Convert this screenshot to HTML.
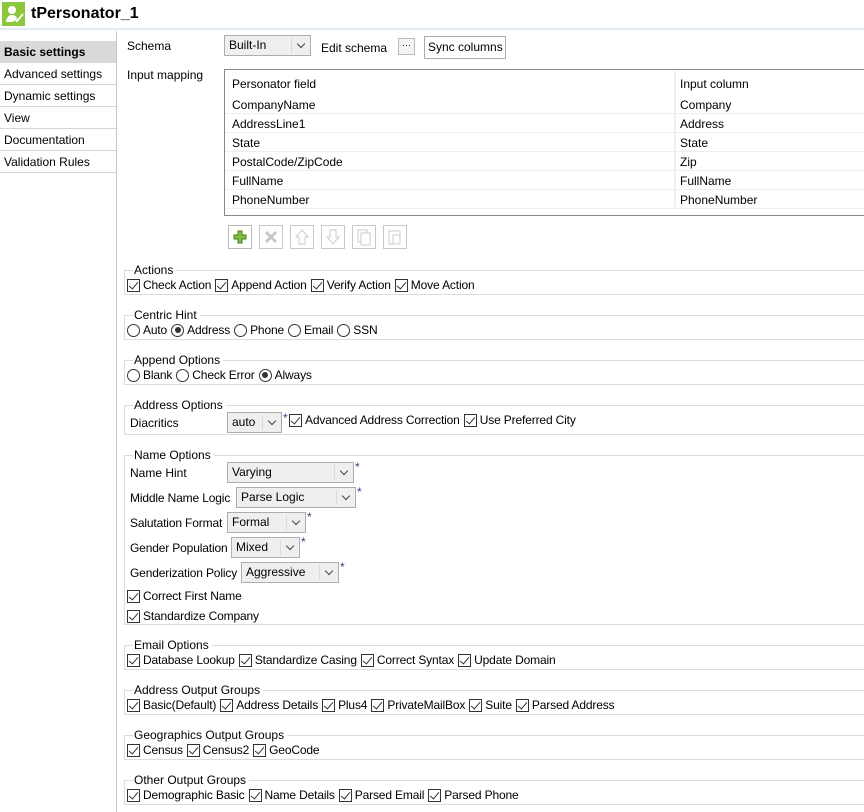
<!DOCTYPE html>
<html><head><meta charset="utf-8"><style>
*{box-sizing:border-box;margin:0;padding:0}
body{width:864px;height:812px;overflow:hidden;background:#fff;font-family:"Liberation Sans",sans-serif;font-size:12px;color:#000;position:relative}
.a{position:absolute;white-space:nowrap}
.side div{position:absolute;left:0;width:116px;height:22px;border-bottom:1px solid #d6d6d6;padding:4px 0 0 4px}
.grp{position:absolute;left:124px;right:-2px;border:1px solid #dcdcdc;border-right:none}
.gt{position:absolute;left:8px;top:-8px;background:#fff;padding:0 3px 0 1px;line-height:14px}
.row{position:absolute;left:2px;display:flex;align-items:center;white-space:nowrap;letter-spacing:-0.15px}
.cb{width:13px;height:13px;border:1px solid #333;display:inline-block;position:relative;margin-right:3px;background:#fff}
.cb:after{content:"";position:absolute;left:3px;top:0px;width:4px;height:8px;border:solid #333;border-width:0 1.3px 1.3px 0;transform:rotate(40deg)}
.rb{width:13px;height:13px;border:1px solid #333;border-radius:50%;display:inline-block;position:relative;margin-right:3px}
.rb.on:after{content:"";position:absolute;left:2.5px;top:2.5px;width:6px;height:6px;border-radius:50%;background:#333}
.it{margin-right:4px;display:inline-flex;align-items:center}
.combo{position:absolute;height:21px;background:#efefef;border:1px solid #adadad;padding:2px 0 0 4px;line-height:15px}
.combo .ar{position:absolute;right:0;top:2px;width:19px;height:15px;border-left:1px solid #dadada}
.combo .ar:after{content:"";position:absolute;left:6px;top:3px;width:5px;height:5px;border:solid #444;border-width:0 1.5px 1.5px 0;transform:rotate(45deg)}
.star{position:absolute;color:#2a4a7a;font-size:12px}
.tb{position:absolute;top:225px;width:24px;height:24px;border:1px solid #c8c8c8;background:#fff}
.tx{position:absolute;white-space:nowrap;top:1px}
</style></head><body>
<div class="a" style="left:0;top:0;width:864px;height:30px;border-bottom:2px solid #e3ecf5"></div>
<div class="a" style="left:2px;top:2px;width:23px;height:24px;background:#8cc83c"></div>
<svg class="a" style="left:4px;top:4px" width="20" height="20"><circle cx="8" cy="6" r="4" fill="#fff"/><path d="M2 18 Q3 11 8 11 Q12 11 13 14 L9 18Z" fill="#fff"/><path d="M10 14 l3 3 l6 -7" stroke="#fff" stroke-width="2" fill="none"/></svg>
<div class="a" style="left:31px;top:5px;font-size:16px;font-weight:bold">tPersonator_1</div>
<div class="a" style="left:116px;top:31px;width:1px;height:781px;background:#c8c8c8"></div>
<div class="side">
<div style="top:41px;background:#d9d9d9;font-weight:bold">Basic settings</div>
<div style="top:63px">Advanced settings</div>
<div style="top:85px">Dynamic settings</div>
<div style="top:107px">View</div>
<div style="top:129px">Documentation</div>
<div style="top:151px">Validation Rules</div>
</div>
<div class="a" style="left:127px;top:39px">Schema</div>
<div class="combo" style="left:224px;top:35px;width:87px">Built-In<span class="ar"></span></div>
<div class="a" style="left:321px;top:41px">Edit schema</div>
<div class="a" style="left:398px;top:38px;width:17px;height:17px;border:1px solid #bbb;background:#f4f4f4;font-size:9px;text-align:center;line-height:12px">···</div>
<div class="a" style="left:424px;top:36px;width:82px;height:23px;border:1px solid #aaa;padding:3px 0 0 3px">Sync columns</div>
<div class="a" style="left:127px;top:68px">Input mapping</div>
<div class="a" style="left:224px;top:69px;width:645px;height:147px;border:1px solid #828790"></div>
<div class="a" style="left:674px;top:71px;width:2px;height:136px;background:#eef0f3"></div>
<div class="a" style="left:232px;top:77px">Personator field</div><div class="a" style="left:680px;top:77px">Input column</div>
<div class="a" style="left:232px;top:98px">CompanyName</div><div class="a" style="left:680px;top:98px">Company</div>
<div class="a" style="left:232px;top:117px">AddressLine1</div><div class="a" style="left:680px;top:117px">Address</div>
<div class="a" style="left:232px;top:136px">State</div><div class="a" style="left:680px;top:136px">State</div>
<div class="a" style="left:232px;top:155px">PostalCode/ZipCode</div><div class="a" style="left:680px;top:155px">Zip</div>
<div class="a" style="left:232px;top:174px">FullName</div><div class="a" style="left:680px;top:174px">FullName</div>
<div class="a" style="left:232px;top:193px">PhoneNumber</div><div class="a" style="left:680px;top:193px">PhoneNumber</div>
<div class="a" style="left:225px;top:113px;width:640px;border-top:1px solid #eceef1"></div>
<div class="a" style="left:225px;top:132px;width:640px;border-top:1px solid #eceef1"></div>
<div class="a" style="left:225px;top:151px;width:640px;border-top:1px solid #eceef1"></div>
<div class="a" style="left:225px;top:170px;width:640px;border-top:1px solid #eceef1"></div>
<div class="a" style="left:225px;top:189px;width:640px;border-top:1px solid #eceef1"></div>
<div class="a" style="left:225px;top:208px;width:640px;border-top:1px solid #eceef1"></div>
<div class="tb" style="left:228px;border-color:#b8b8b8"><svg width="22" height="22"><path d="M9 5h4v4h4v4h-4v4h-4v-4h-4v-4h4z" fill="#7cbf3c" stroke="#4a7a20"/></svg></div>
<div class="tb" style="left:259px"><svg width="22" height="22"><path d="M6 6l10 10M16 6l-10 10" stroke="#c8c8c8" stroke-width="3"/></svg></div>
<div class="tb" style="left:290px"><svg width="22" height="22"><path d="M11 4l6 7h-3v7h-6v-7h-3z" fill="none" stroke="#ccc"/></svg></div>
<div class="tb" style="left:321px"><svg width="22" height="22"><path d="M11 18l6 -7h-3v-7h-6v7h-3z" fill="none" stroke="#ccc"/></svg></div>
<div class="tb" style="left:352px"><svg width="22" height="22"><rect x="5" y="4" width="9" height="12" fill="none" stroke="#ccc"/><rect x="8" y="7" width="9" height="12" fill="#fff" stroke="#ccc"/></svg></div>
<div class="tb" style="left:383px"><svg width="22" height="22"><rect x="5" y="5" width="11" height="13" fill="none" stroke="#ccc"/><rect x="9" y="9" width="7" height="9" fill="#fff" stroke="#ccc"/></svg></div>

<div class="grp" style="top:270px;height:25px"><span class="gt">Actions</span>
<div class="row" style="top:7px"><span class="it"><i class="cb"></i>Check Action</span><span class="it"><i class="cb"></i>Append Action</span><span class="it"><i class="cb"></i>Verify Action</span><span class="it"><i class="cb"></i>Move Action</span></div></div>
<div class="grp" style="top:315px;height:25px"><span class="gt">Centric Hint</span>
<div class="row" style="top:7px"><span class="it"><i class="rb"></i>Auto</span><span class="it"><i class="rb on"></i>Address</span><span class="it"><i class="rb"></i>Phone</span><span class="it"><i class="rb"></i>Email</span><span class="it"><i class="rb"></i>SSN</span></div></div>
<div class="grp" style="top:360px;height:25px"><span class="gt">Append Options</span>
<div class="row" style="top:7px"><span class="it"><i class="rb"></i>Blank</span><span class="it"><i class="rb"></i>Check Error</span><span class="it"><i class="rb on"></i>Always</span></div></div>
<div class="grp" style="top:405px;height:30px"><span class="gt">Address Options</span>
<div class="a" style="left:5px;top:10px">Diacritics</div>
<div class="combo" style="left:102px;top:6px;width:55px">auto<span class="ar"></span></div>
<span class="star" style="left:158px;top:5px">*</span>
<div class="row" style="left:164px;top:7px"><span class="it"><i class="cb"></i>Advanced Address Correction</span><span class="it"><i class="cb"></i>Use Preferred City</span></div></div>
<div class="grp" style="top:455px;height:170px"><span class="gt">Name Options</span>
<div class="a" style="left:5px;top:10px">Name Hint</div>
<div class="combo" style="left:102px;top:6px;width:127px">Varying<span class="ar"></span></div><span class="star" style="left:230px;top:4px">*</span>
<div class="a" style="left:5px;top:35px;letter-spacing:-0.15px">Middle Name Logic</div>
<div class="combo" style="left:111px;top:31px;width:120px">Parse Logic<span class="ar"></span></div><span class="star" style="left:232px;top:29px">*</span>
<div class="a" style="left:5px;top:60px;letter-spacing:-0.15px">Salutation Format</div>
<div class="combo" style="left:102px;top:56px;width:79px">Formal<span class="ar"></span></div><span class="star" style="left:182px;top:54px">*</span>
<div class="a" style="left:5px;top:85px;letter-spacing:-0.15px">Gender Population</div>
<div class="combo" style="left:106px;top:81px;width:69px">Mixed<span class="ar"></span></div><span class="star" style="left:176px;top:79px">*</span>
<div class="a" style="left:5px;top:110px;letter-spacing:-0.15px">Genderization Policy</div>
<div class="combo" style="left:116px;top:106px;width:98px">Aggressive<span class="ar"></span></div><span class="star" style="left:215px;top:104px">*</span>
<div class="row" style="top:133px"><span class="it"><i class="cb"></i>Correct First Name</span></div>
<div class="row" style="top:153px"><span class="it"><i class="cb"></i>Standardize Company</span></div></div>
<div class="grp" style="top:645px;height:25px"><span class="gt">Email Options</span>
<div class="row" style="top:7px"><span class="it"><i class="cb"></i>Database Lookup</span><span class="it"><i class="cb"></i>Standardize Casing</span><span class="it"><i class="cb"></i>Correct Syntax</span><span class="it"><i class="cb"></i>Update Domain</span></div></div>
<div class="grp" style="top:690px;height:25px"><span class="gt">Address Output Groups</span>
<div class="row" style="top:7px"><span class="it"><i class="cb"></i>Basic(Default)</span><span class="it"><i class="cb"></i>Address Details</span><span class="it"><i class="cb"></i>Plus4</span><span class="it"><i class="cb"></i>PrivateMailBox</span><span class="it"><i class="cb"></i>Suite</span><span class="it"><i class="cb"></i>Parsed Address</span></div></div>
<div class="grp" style="top:735px;height:25px"><span class="gt">Geographics Output Groups</span>
<div class="row" style="top:7px"><span class="it"><i class="cb"></i>Census</span><span class="it"><i class="cb"></i>Census2</span><span class="it"><i class="cb"></i>GeoCode</span></div></div>
<div class="grp" style="top:780px;height:25px"><span class="gt">Other Output Groups</span>
<div class="row" style="top:7px"><span class="it"><i class="cb"></i>Demographic Basic</span><span class="it"><i class="cb"></i>Name Details</span><span class="it"><i class="cb"></i>Parsed Email</span><span class="it"><i class="cb"></i>Parsed Phone</span></div></div>
</body></html>
